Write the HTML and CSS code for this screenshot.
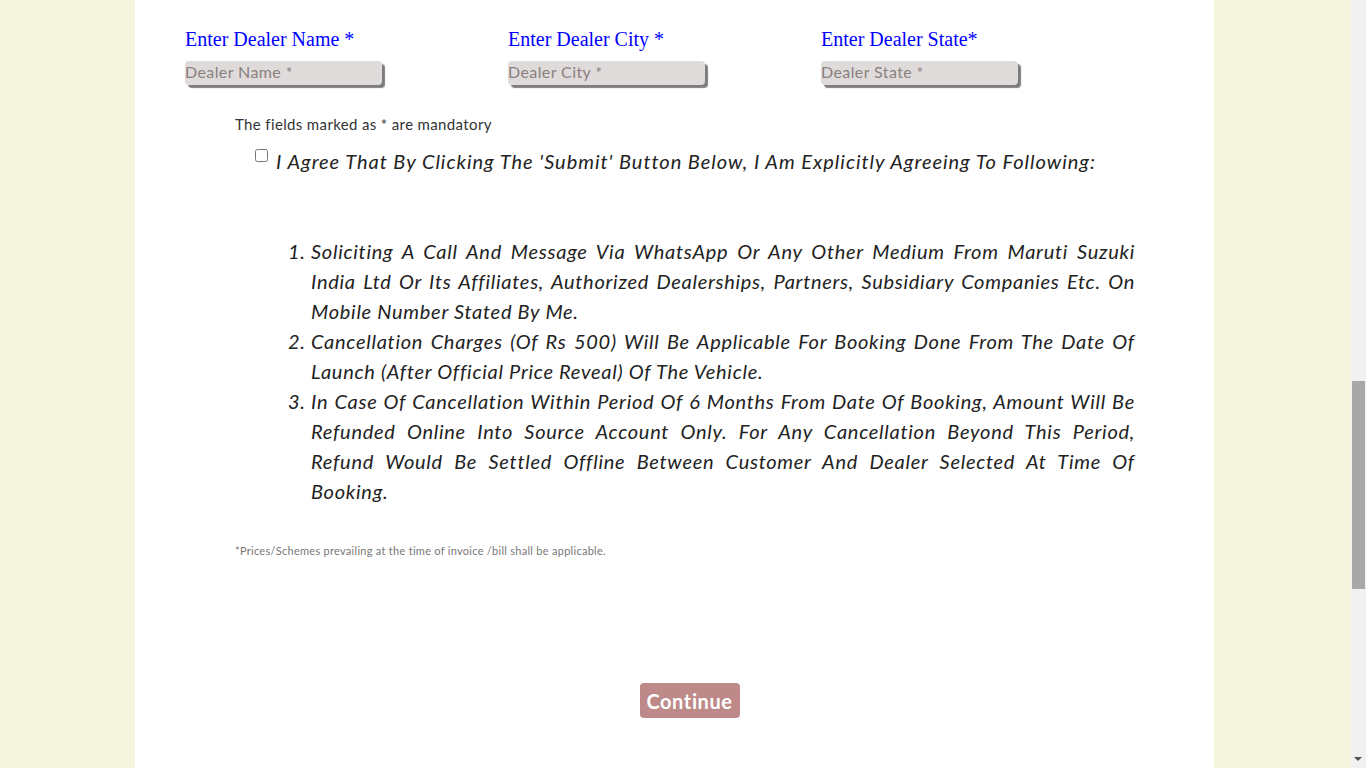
FILE: index.html
```html
<!DOCTYPE html>
<html>
<head>
<meta charset="utf-8">
<link rel="stylesheet" href="styles.css">
</head>
<body>
<div class="panel">
  <div class="dealer-row">
    <div class="field">
      <label class="field-label">Enter Dealer Name *</label>
      <input class="field-input" type="text" placeholder="Dealer Name *">
    </div>
    <div class="field">
      <label class="field-label">Enter Dealer City *</label>
      <input class="field-input" type="text" placeholder="Dealer City *">
    </div>
    <div class="field">
      <label class="field-label">Enter Dealer State*</label>
      <input class="field-input" type="text" placeholder="Dealer State *">
    </div>
  </div>

  <div class="terms">
    <p class="mandatory">The fields marked as * are mandatory</p>
    <div class="agree">
      <input class="agree-box" type="checkbox">
      <span class="agree-text">I Agree That By Clicking The 'Submit' Button Below, I Am Explicitly Agreeing To Following:</span>
    </div>
    <ol class="terms-list">
      <li>Soliciting A Call And Message Via WhatsApp Or Any Other Medium From Maruti Suzuki India Ltd Or Its Affiliates, Authorized Dealerships, Partners, Subsidiary Companies Etc. On Mobile Number Stated By Me.</li>
      <li>Cancellation Charges (Of Rs 500) Will Be Applicable For Booking Done From The Date Of Launch (After Official Price Reveal) Of The Vehicle.</li>
      <li>In Case Of Cancellation Within Period Of 6 Months From Date Of Booking, Amount Will Be Refunded Online Into Source Account Only. For Any Cancellation Beyond This Period, Refund Would Be Settled Offline Between Customer And Dealer Selected At Time Of Booking.</li>
    </ol>
    <p class="footnote">*Prices/Schemes prevailing at the time of invoice /bill shall be applicable.</p>
  </div>

  <div class="actions">
    <button class="continue-btn" type="button">Continue</button>
  </div>
</div>

<div class="scrollbar">
  <div class="scroll-thumb"></div>
  <div class="scroll-arrow"></div>
</div>
</body>
</html>
```

FILE: styles.css
```css
html, body {
  margin: 0;
  padding: 0;
}

body {
  background: #f5f4dc;
  font-family: "Lato", "Open Sans", sans-serif;
  width: 1351px;
  min-height: 768px;
}

.panel {
  width: 1079px;
  margin: 0 auto 0 135px;
  background: #ffffff;
  min-height: 768px;
  box-sizing: border-box;
  padding-top: 28px;
}

.dealer-row {
  display: grid;
  grid-template-columns: 323px 313px auto;
  padding-left: 50px;
}

.field {
  display: flex;
  flex-direction: column;
  align-items: flex-start;
}

.field-label {
  font-family: "Liberation Serif", "Times New Roman", serif;
  font-size: 20px;
  line-height: 23px;
  color: #0000ff;
}

.field-input {
  margin-top: 10px;
  width: 197px;
  height: 24px;
  box-sizing: border-box;
  border: none;
  border-radius: 4px;
  background: #e0dbdb;
  box-shadow: 3px 3px 1px #7d7d7d;
  padding: 0 0 3px 0;
  font-family: "Lato", sans-serif;
  font-size: 16px;
  letter-spacing: 0.4px;
  color: #333;
  outline: none;
}

.field-input::placeholder {
  color: #8b8080;
}

.terms {
  padding-left: 100px;
  padding-right: 79px;
}

.mandatory {
  margin: 30px 0 0 0;
  font-size: 15px;
  line-height: 18px;
  letter-spacing: 0.36px;
  color: #333333;
}

.agree {
  display: flex;
  align-items: flex-start;
  margin-top: 16px;
  padding-left: 20px;
}

.agree-box {
  margin: 0 8px 0 0;
  width: 13px;
  height: 13px;
}

.agree-text {
  font-style: italic;
  font-size: 20px;
  line-height: 24px;
  letter-spacing: 0.97px;
  color: #222222;
}

.terms-list {
  margin: 63px 0 0 0;
  padding-left: 76px;
  font-style: italic;
  font-size: 20px;
  line-height: 30px;
  letter-spacing: 0.72px;
  color: #222222;
  text-align: justify;
}

.footnote {
  margin: 38px 0 0 0;
  font-size: 11px;
  line-height: 14px;
  letter-spacing: 0.28px;
  color: #777777;
}

.actions {
  display: flex;
  justify-content: center;
  padding-left: 30px;
  margin-top: 125px;
}

.continue-btn {
  width: 100px;
  height: 35px;
  border: none;
  border-radius: 4px;
  background: #bd8989;
  color: #ffffff;
  font-family: "Lato", sans-serif;
  font-weight: 700;
  font-size: 20px;
  letter-spacing: 0.6px;
  padding: 0;
}

.scrollbar {
  position: fixed;
  top: 0;
  right: 0;
  width: 15px;
  height: 768px;
  background: #f1f1f1;
}

.scroll-thumb {
  position: absolute;
  left: 1px;
  top: 381px;
  width: 13px;
  height: 208px;
  background: #a8a8a8;
}

.scroll-arrow {
  position: absolute;
  left: 3px;
  top: 757px;
  width: 0;
  height: 0;
  border-left: 4px solid transparent;
  border-right: 4px solid transparent;
  border-top: 4px solid #505050;
}
```
